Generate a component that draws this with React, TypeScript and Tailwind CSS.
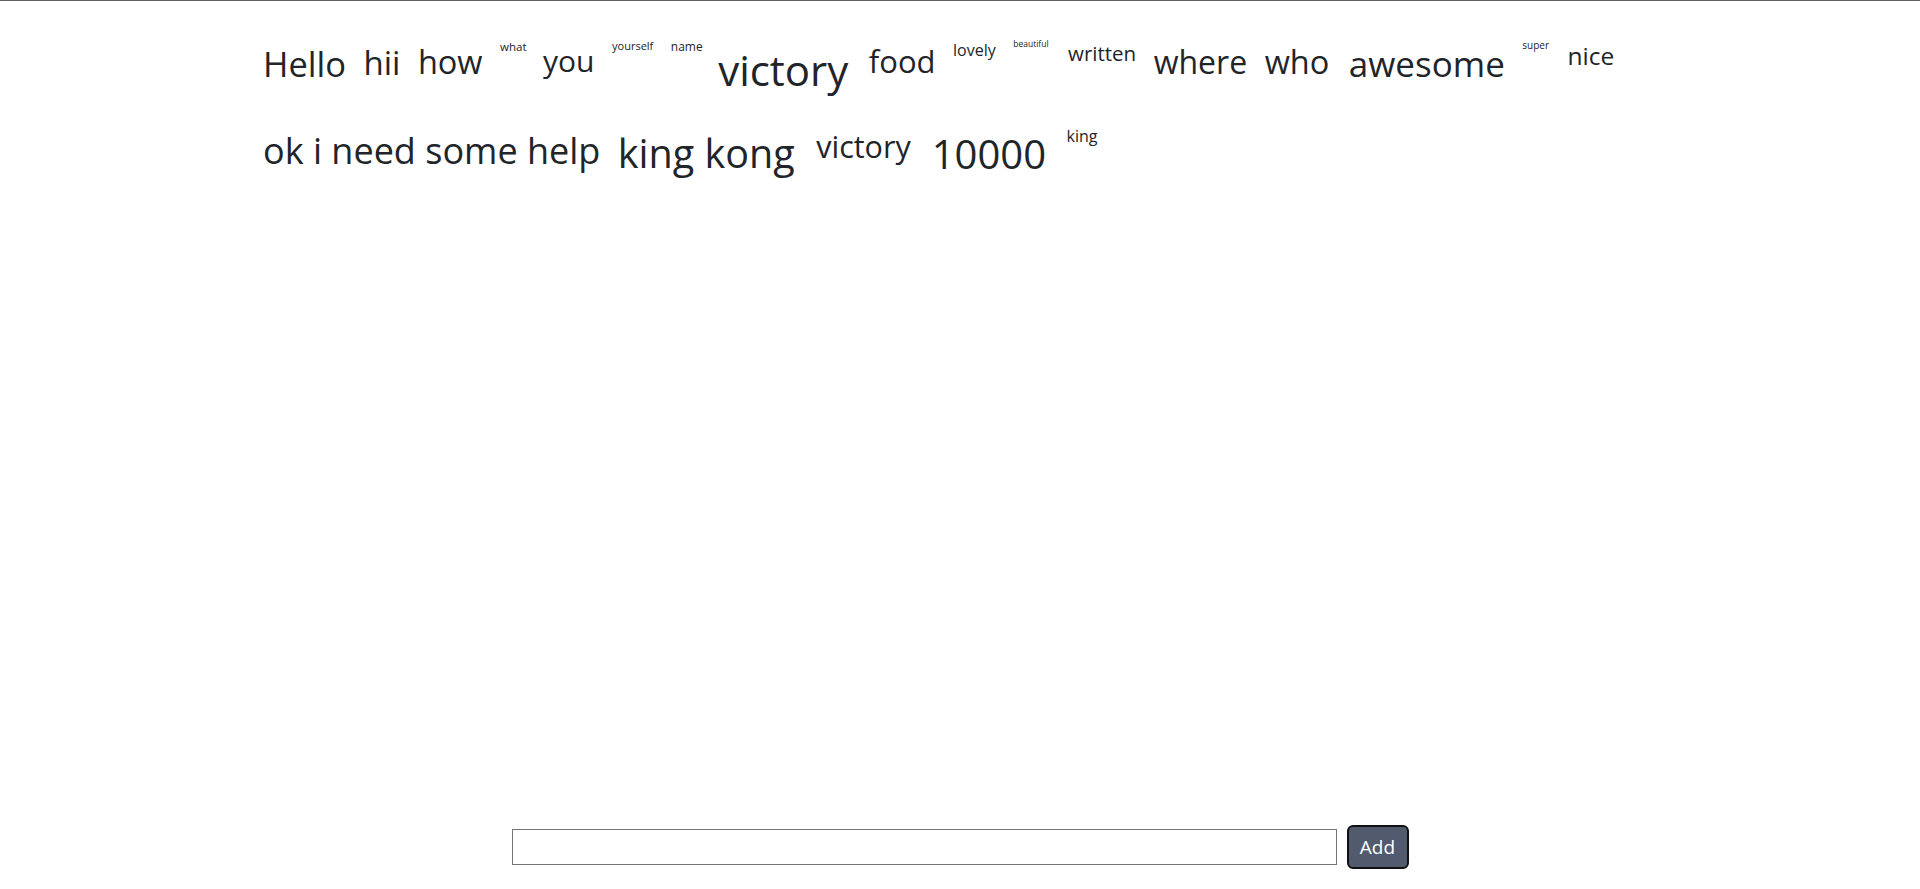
import React from "react";

interface Word {
  text: string;
  size: string;
  extra?: string;
}

// each word keeps its own size class, written out in full
const words: Word[] = [
  { text: "Hello", size: "text-[34.5px]" },
  { text: "hii", size: "text-[33px]" },
  { text: "how", size: "text-[32.5px]" },
  { text: "what", size: "text-[11.5px]" },
  { text: "you", size: "text-[30px]", extra: "-ml-[1px]" },
  { text: "yourself", size: "text-[11px]" },
  { text: "name", size: "text-[12px]" },
  { text: "victory", size: "text-[42px]", extra: "-ml-[2px]" },
  { text: "food", size: "text-[31px]", extra: "ml-[3px]" },
  { text: "lovely", size: "text-[16px]" },
  { text: "beautiful", size: "text-[8.5px]" },
  { text: "written", size: "text-[20.5px]", extra: "ml-[2px]" },
  { text: "where", size: "text-[32px]" },
  { text: "who", size: "text-[32.5px]" },
  { text: "awesome", size: "text-[35px]", extra: "ml-[2px]" },
  { text: "super", size: "text-[10px]" },
  { text: "nice", size: "text-[24.5px]", extra: "ml-[1px]" },
  { text: "ok i need some help", size: "text-[36px]" },
  { text: "king kong", size: "text-[39.5px]" },
  { text: "victory", size: "text-[30.5px]", extra: "ml-[4px]" },
  { text: "10000", size: "text-[40px]", extra: "ml-[3.5px]" },
  { text: "king", size: "text-[16px]", extra: "ml-[3px]" },
];

const WordCloud = () => {
  return (
    <div className="mx-auto w-[1394px] pt-[37px] flex flex-wrap items-start gap-x-[17.5px] gap-y-[23px]">
      {words.map((word, idx) => (
        <span
          key={idx}
          className={`${word.size} ${word.extra ?? ""} leading-[1.5] text-[#212529]`}
        >
          {word.text}
        </span>
      ))}
    </div>
  );
};

const AddForm = () => {
  return (
    <div className="flex items-center justify-center gap-[10px] pb-[20px]">
      <input
        type="text"
        className="w-[825px] h-[36px] border border-[#767676] bg-white outline-none"
      />
      <button className="w-[62px] h-[44px] rounded-[6px] border-2 border-[#111] bg-[#525a6e] text-white text-[19px]">
        Add
      </button>
    </div>
  );
};

export default function App() {
  return (
    <div
      className="h-screen flex flex-col bg-white border-t border-[#5f5f5f]"
      style={{ fontFamily: '"Open Sans", "Noto Sans", sans-serif' }}
    >
      <div className="flex-1">
        <WordCloud />
      </div>
      <AddForm />
    </div>
  );
}
